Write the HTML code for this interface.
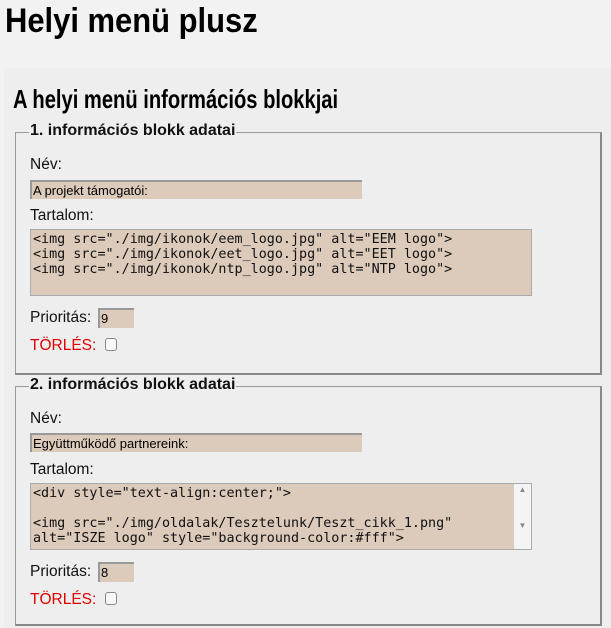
<!DOCTYPE html>
<html><head><meta charset="utf-8"><style>
*{box-sizing:border-box}
body{margin:0;background:#f2f2f2;font-family:"Liberation Sans",sans-serif;width:611px;height:612px;overflow:hidden;position:relative}
.a{position:absolute;white-space:nowrap}
h1,h2{margin:0;font-weight:bold;transform-origin:0 0}
.panel{position:absolute;left:4px;top:68px;width:607px;height:560px;background:#eeeeee}
.fs{position:absolute;left:15px;width:587px;border:2px solid #a8a8a8;border-width:1px 2px 2px 1px;border-color:#999 #888 #888 #999}
.lg{position:absolute;left:13px;top:-11px;background:#eee;padding:0 1px;font-weight:bold;font-size:16px;color:#111}
.lb{font-size:15.5px;color:#111}
.in{position:absolute;background:#dccabb;border-top:2px solid #999;border-left:2px solid #999;font-size:13px;padding:1px 1px;color:#000}
.ta{position:absolute;background:#dccabb;border:1px solid #aaa;font-family:"DejaVu Sans Mono","Liberation Mono",monospace;font-size:13.4px;line-height:15px;padding:2px 2px;white-space:pre;color:#111;overflow:hidden}
.cb{position:absolute;width:12px;height:13px;border:1px solid #888;border-radius:3px;background:#f8f8f8}
.red{color:#e00000}
</style></head><body>
<h1 class="a" style="left:5px;top:2px;font-size:34px;transform:scaleX(0.91)">Helyi menü plusz</h1>
<div class="panel"></div>
<h2 class="a" style="left:13px;top:84px;font-size:26px;transform:scaleX(0.775)">A helyi menü információs blokkjai</h2>

<div class="fs" style="top:132px;height:243px"><div class="lg">1. információs blokk adatai</div></div>
<div class="a lb" style="left:30px;top:156px">Név:</div>
<div class="in" style="left:30px;top:180px;width:332px;height:19px">A projekt támogatói:</div>
<div class="a lb" style="left:30px;top:207px">Tartalom:</div>
<div class="ta" style="left:30px;top:229px;width:502px;height:67px">&lt;img src="./img/ikonok/eem_logo.jpg" alt="EEM logo"&gt;
&lt;img src="./img/ikonok/eet_logo.jpg" alt="EET logo"&gt;
&lt;img src="./img/ikonok/ntp_logo.jpg" alt="NTP logo"&gt;</div>
<div class="a lb" style="left:30px;top:309px">Prioritás:</div>
<div class="in" style="left:98px;top:308px;width:36px;height:20px">9</div>
<div class="a lb red" style="left:30px;top:337px">TÖRLÉS:</div>
<div class="cb" style="left:105px;top:338px"></div>

<div class="fs" style="top:386px;height:240px"><div class="lg">2. információs blokk adatai</div></div>
<div class="a lb" style="left:30px;top:410px">Név:</div>
<div class="in" style="left:30px;top:433px;width:332px;height:19px">Együttműködő partnereink:</div>
<div class="a lb" style="left:30px;top:461px">Tartalom:</div>
<div class="ta" style="left:30px;top:483px;width:502px;height:67px;padding-right:20px">&lt;div style="text-align:center;"&gt;

&lt;img src="./img/oldalak/Tesztelunk/Teszt_cikk_1.png"
alt="ISZE logo" style="background-color:#fff"&gt;</div>
<div class="a" style="left:514px;top:484px;width:17px;height:65px;background:#f4f4f4;font-size:8px;color:#888;text-align:center;line-height:12px">▲<br><br><br>▼</div>
<div class="a lb" style="left:30px;top:563px">Prioritás:</div>
<div class="in" style="left:98px;top:562px;width:36px;height:20px">8</div>
<div class="a lb red" style="left:30px;top:591px">TÖRLÉS:</div>
<div class="cb" style="left:105px;top:592px"></div>
</body></html>
